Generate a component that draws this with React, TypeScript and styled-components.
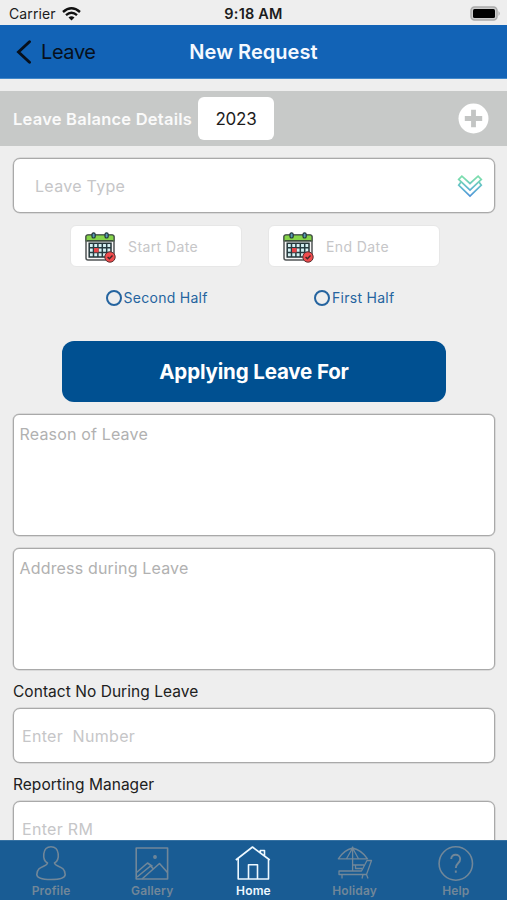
import React from "react";
import styled, { createGlobalStyle } from "styled-components";

const GlobalStyle = createGlobalStyle`
  *, *::before, *::after { box-sizing: border-box; }
  body { margin: 0; overflow: hidden; background: #eeeeee; font-family: Inter, "Liberation Sans", sans-serif; }
  svg { display: block; flex: none; }
`;

const Screen = styled.div`
  width: 507px;
  height: 900px;
  display: flex;
  flex-direction: column;
  overflow: hidden;
  background: #eeeeee;
`;

const StatusBar = styled.header`
  height: 25px;
  flex: none;
  display: grid;
  grid-template-columns: 1fr auto 1fr;
  align-items: center;
  padding: 2px 6px 0 9px;
  color: #1c1c1c;
`;

const Carrier = styled.div`
  display: flex;
  align-items: center;
  gap: 6px;
  font-size: 14px;
  letter-spacing: 0.12px;
`;

const Clock = styled.div`
  margin-right: 3px;
  font-size: 14.5px;
  font-weight: 600;
  letter-spacing: 0.2px;
`;

const BatterySlot = styled.div`
  justify-self: end;
`;

const NavBar = styled.nav`
  height: 54px;
  flex: none;
  display: grid;
  grid-template-columns: 1fr auto 1fr;
  align-items: center;
  padding: 0 16px;
  background: #1263b6;
  border-bottom: 1px solid #4288c9;
`;

const BackButton = styled.button`
  display: flex;
  align-items: center;
  gap: 9px;
  padding: 0;
  border: 0;
  background: none;
  color: #07101c;
  font: 400 20px Inter, sans-serif;
  letter-spacing: -0.4px;
`;

const NavTitle = styled.h1`
  margin: 0;
  color: #f5f9ff;
  font-size: 20px;
  font-weight: 600;
  letter-spacing: 0.05px;
`;

const BalanceBar = styled.section`
  height: 55px;
  flex: none;
  margin-top: 12px;
  display: flex;
  align-items: center;
  padding: 0 18px 0 13px;
  background: #c7c9c8;
`;

const BalanceTitle = styled.span`
  width: 185px;
  white-space: nowrap;
  color: #fafafa;
  font-size: 16.5px;
  font-weight: 600;
  letter-spacing: 0.23px;
`;

const YearBox = styled.div`
  width: 76px;
  height: 43px;
  display: grid;
  place-items: center;
  margin-right: auto;
  border-radius: 6px;
  background: #fff;
  color: #1c1c1c;
  font-size: 17px;
  letter-spacing: -0.2px;
`;

const Form = styled.main`
  flex: 1;
  min-height: 0;
  overflow: hidden;
  display: flex;
  flex-direction: column;
  padding: 12px 12px 0 13px;
`;

const Field = styled.div<{ $inset: number }>`
  height: 55px;
  flex: none;
  display: flex;
  align-items: center;
  justify-content: space-between;
  padding: 0 11px 0 ${(p) => p.$inset}px;
  border: 1px solid #a9a9a9;
  border-radius: 7px;
  background: #fff;
  box-shadow: 0 0 0 0.5px #c4c4c4;
  color: #c6c6c8;
  font-size: 16px;
  letter-spacing: 0.3px;
  white-space: pre;
`;

const DateRow = styled.div`
  flex: none;
  display: flex;
  gap: 26px;
  margin: 12px 0 0 57px;
`;

const DateBox = styled.div`
  width: 172px;
  height: 42px;
  display: flex;
  align-items: center;
  gap: 12px;
  padding-left: 14px;
  border: 1px solid #e7e7e7;
  border-radius: 6px;
  background: #fff;
  color: #c6c6c8;
  font-size: 14px;
  letter-spacing: 0.4px;
  svg { position: relative; top: 1px; }
`;

const HalfRow = styled.div`
  height: 20px;
  flex: none;
  display: grid;
  grid-template-columns: 208.5px 1fr;
  align-items: center;
  margin: 21px 0 0 92.5px;
`;

const HalfOption = styled.label`
  display: flex;
  align-items: center;
  gap: 2px;
  color: #25649f;
  font-size: 14px;
  line-height: 16px;
  letter-spacing: 0.28px;
`;

const RadioRing = styled.span`
  width: 16px;
  height: 16px;
  border: 2px solid #25649f;
  border-radius: 50%;
`;

const ApplyButton = styled.button`
  width: 384px;
  height: 61px;
  flex: none;
  align-self: center;
  margin: 33px 0 12px;
  border: 0;
  border-radius: 12px;
  background: #005091;
  color: #fff;
  font: 700 20.5px Inter, sans-serif;
  letter-spacing: -0.15px;
`;

const NoteArea = styled.div`
  height: 122px;
  flex: none;
  margin-bottom: 12px;
  padding: 9px 5.5px;
  border: 1px solid #a9a9a9;
  border-radius: 6px;
  background: #fff;
  box-shadow: 0 0 0 0.5px #c4c4c4;
  color: #b1b1b1;
  font-size: 16px;
  line-height: 20px;
  letter-spacing: 0.17px;
`;

const FieldLabel = styled.label`
  height: 26px;
  flex: none;
  color: #202020;
  font-size: 15.5px;
  line-height: 20px;
  letter-spacing: 0.04px;
`;

const FieldGap = styled.div`
  height: 12px;
  flex: none;
`;

const TabBar = styled.nav`
  height: 60px;
  flex: none;
  display: grid;
  grid-template-columns: repeat(5, 101.2px);
  background: #195c94;
  border-top: 1px solid #3671a2;
`;

const Tab = styled.div<{ $active?: boolean }>`
  display: flex;
  flex-direction: column;
  align-items: center;
  padding-top: 4px;
  color: ${(p) => (p.$active ? "#edf8ff" : "#718799")};
  font-size: 12px;
  font-weight: 600;
  line-height: 15px;
  letter-spacing: 0.15px;
  svg { margin-bottom: 1px; }
`;

const TabName = styled.span`
  padding-left: 1px;
`;

const WifiIcon = () => (
  <svg width="19" height="14" viewBox="0 0 19 14" fill="none" stroke="#111" strokeWidth="2.4">
    <path d="M1 5Q9.5-2.4 18 5M4 8.1Q9.5 3.3 15 8.1" />
    <path d="M6.5 10.5Q9.5 8 12.5 10.5L9.5 13.5Z" fill="#111" stroke="none" />
  </svg>
);

const BatteryIcon = () => (
  <svg width="31" height="15" viewBox="0 0 31 15">
    <rect x="1" y="1" width="26" height="13" rx="3.5" fill="#ccc" stroke="#aaa" strokeWidth="1.5" />
    <rect x="3" y="3" width="22" height="9" rx="1.5" fill="#000" />
    <path d="M28.5 5Q31 7.5 28.5 10Z" fill="#aaa" />
  </svg>
);

const BackIcon = () => (
  <svg width="16" height="24" viewBox="0 0 16 24" fill="none" stroke="currentColor" strokeWidth="2.9" strokeLinecap="round">
    <path d="M13.5 1.8L2.5 12L13.5 22.2" />
  </svg>
);

const AddIcon = () => (
  <svg width="31" height="31" viewBox="0 0 31 31">
    <circle cx="15.5" cy="15.5" r="15" fill="#fff" />
    <path d="M15.5 6.8V24.2M6.8 15.5H24.2" stroke="#c3c5c4" strokeWidth="4.8" />
  </svg>
);

const ChevronsIcon = () => (
  <svg width="26" height="24" viewBox="0 0 26 24" fill="none" strokeWidth="1.7">
    <defs>
      <linearGradient id="chevrons" x1="0" y1="0" x2="0" y2="24" gradientUnits="userSpaceOnUse">
        <stop offset=".2" stopColor="#7bdcae" />
        <stop offset=".55" stopColor="#60bbce" />
        <stop offset="1" stopColor="#4c8cda" />
      </linearGradient>
    </defs>
    <g stroke="url(#chevrons)">
      <path d="M1.7 5.4L4.9 2.2L13 9.5L21.1 2.2L24.3 5.4L13 16Z" />
      <path d="M4 8L1.7 11.2L13 22L24.3 11.2L22 8" />
    </g>
  </svg>
);

const CalendarIcon = () => (
  <svg width="31" height="31" viewBox="0 0 31 31" fill="none">
    <rect x="1" y="3" width="28" height="25" rx="2" fill="#f7f7f7" stroke="#515657" strokeWidth="1.5" />
    <path d="M1 9V4.5Q1 3 3 3H27Q29 3 29 5V9Z" fill="#86d449" stroke="#3e5041" strokeWidth="1.1" />
    <path d="M2 8.8H28" stroke="#334039" strokeWidth="1.2" />
    <path d="M4.2 11.2H26V25H4.2Z" fill="#d5f1f3" stroke="#243538" strokeWidth="1.5" />
    <path d="M8.5 11.2V25M12.9 11.2V25M17.3 11.2V25M21.7 11.2V25M4.2 15.8H26M4.2 20.4H26" stroke="#263c41" strokeWidth="1.5" />
    <rect x="9" y="16" width="4.6" height="4.4" fill="#e84749" />
    <g fill="#579bb4" stroke="#22343a" strokeWidth="1.2">
      <rect x="7" y="0.8" width="3.2" height="5.2" rx="1.6" />
      <rect x="20" y="0.8" width="3.2" height="5.2" rx="1.6" />
    </g>
    <circle cx="25" cy="25" r="5.2" fill="#f14b4d" stroke="#593334" strokeWidth="1" />
    <path d="M22.6 25L24.4 26.7L27.5 23.4" stroke="#422829" strokeWidth="1.4" />
  </svg>
);

const TabSvg = ({ children }: { children: React.ReactNode }) => (
  <svg width="37" height="37" viewBox="0 0 37 37" fill="none" stroke="currentColor" strokeWidth="1.6" strokeLinejoin="round">
    {children}
  </svg>
);

const tabs = [
  {
    name: "Profile",
    drawing: <path d="M15.5 18C10 15 10 1.7 19 1.7S28 15 22.5 18C23 22 33.2 20.5 33.2 29.5Q33.2 34.5 19 34.5T4.8 29.5C4.8 20.5 15 22 15.5 18Z" />,
  },
  {
    name: "Gallery",
    drawing: <><rect x="3.2" y="3" width="31.4" height="31" /><path d="M3.5 27.5L14.5 18L19.5 21.5M4 32L17.5 21L20 23.5M9 34L26.5 18.5L34.5 27.5" /><circle cx="22" cy="12" r="1.1" /></>,
  },
  {
    name: "Home",
    active: true,
    drawing: <path d="M1.8 15L18.5 2L35.8 15M4.2 13.5V34H34.5V13.5M14.5 34V19.8H23.5V34M26.3 7.5V5.5H30.5V11" />,
  },
  {
    name: "Holiday",
    drawing: <g strokeWidth="1.3"><path d="M2.3 13.8Q8 5 16.6 3Q25.5 5 31.5 13.8ZM16.6 3L10.5 13.8M16.6 3L22.5 13.8M16.6 1.5V26" /><path d="M3 26H25.5L31 15.5H35.5L30.5 29.5H3ZM6 29.5V33.5M27 29.5L26 33.5M30.5 29.5L32 33.5M17 20H28M19.5 20V23.5H26" /></g>,
  },
  {
    name: "Help",
    drawing: <><circle cx="18.8" cy="18.5" r="16.7" /><path d="M14.2 14C14.2 8.2 23.2 8.5 23.2 14C23.2 18.5 18.8 18 18.8 23M18.8 25.5V27.8" strokeWidth="1.9" /></>,
  },
];

export default function App() {
  return (
    <>
      <GlobalStyle />
      <Screen>
        <StatusBar>
          <Carrier>Carrier <WifiIcon /></Carrier>
          <Clock>9:18 AM</Clock>
          <BatterySlot><BatteryIcon /></BatterySlot>
        </StatusBar>
        <NavBar>
          <BackButton><BackIcon />Leave</BackButton>
          <NavTitle>New Request</NavTitle>
        </NavBar>
        <BalanceBar>
          <BalanceTitle>Leave Balance Details</BalanceTitle>
          <YearBox>2023</YearBox>
          <AddIcon />
        </BalanceBar>
        <Form>
          <Field $inset={21}>Leave Type<ChevronsIcon /></Field>
          <DateRow>
            <DateBox><CalendarIcon />Start Date</DateBox>
            <DateBox><CalendarIcon />End Date</DateBox>
          </DateRow>
          <HalfRow>
            <HalfOption><RadioRing />Second Half</HalfOption>
            <HalfOption><RadioRing />First Half</HalfOption>
          </HalfRow>
          <ApplyButton>Applying Leave For</ApplyButton>
          <NoteArea>Reason of Leave</NoteArea>
          <NoteArea>Address during Leave</NoteArea>
          <FieldLabel>Contact No During Leave</FieldLabel>
          <Field $inset={8}>{"Enter  Number"}</Field>
          <FieldGap />
          <FieldLabel>Reporting Manager</FieldLabel>
          <Field $inset={8}>Enter RM</Field>
        </Form>
        <TabBar>
          {tabs.map((tab) => (
            <Tab key={tab.name} $active={tab.active}>
              <TabSvg>{tab.drawing}</TabSvg>
              <TabName>{tab.name}</TabName>
            </Tab>
          ))}
        </TabBar>
      </Screen>
    </>
  );
}
